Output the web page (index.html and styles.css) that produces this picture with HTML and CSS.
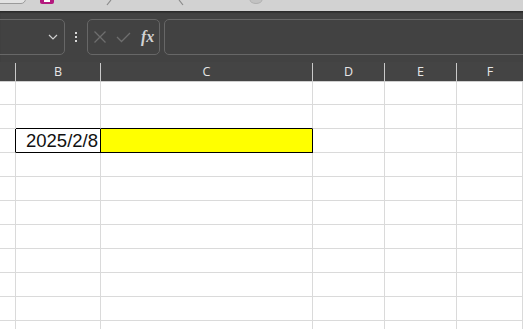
FILE: index.html
```html
<!DOCTYPE html>
<html lang="en">
<head>
    <meta charset="UTF-8">
    <title>Sheet</title>
    <link rel="stylesheet" href="styles.css">
</head>
<body>
    <div class="ribbon">
        <div class="ribbon-tab"></div>
        <div class="ribbon-icon"><span></span></div>
        <svg class="ribbon-marks" width="270" height="11" viewBox="0 0 270 11">
            <path d="M111 0 L107 5" stroke="#8a8a8a" stroke-width="1.2" fill="none"/>
            <path d="M179 0 L183 5" stroke="#8a8a8a" stroke-width="1.2" fill="none"/>
            <ellipse cx="256" cy="0" rx="6" ry="3.5" fill="#c2c2c2" stroke="#b0b0b0"/>
        </svg>
    </div>

    <div class="formula-bar">
        <div class="name-box">
            <svg width="10" height="6" viewBox="0 0 10 6">
                <path d="M1 1 L5 5 L9 1" stroke="#d0d0d0" stroke-width="1.2" fill="none"/>
            </svg>
        </div>
        <div class="more-dots"><i></i><i></i><i></i></div>
        <div class="fx-box">
            <svg class="fx-icon" width="14" height="14" viewBox="0 0 14 14">
                <path d="M1.5 1.5 L12.5 12.5 M12.5 1.5 L1.5 12.5" stroke="#6e6e6e" stroke-width="1.3" fill="none"/>
            </svg>
            <svg class="fx-icon" width="15" height="11" viewBox="0 0 15 11">
                <path d="M1 5 L5.5 9.5 L14 1" stroke="#6e6e6e" stroke-width="1.3" fill="none"/>
            </svg>
            <span class="fx-label">fx</span>
        </div>
        <div class="formula-input"></div>
    </div>

    <div class="sheet">
        <div class="grid head">
            <div class="hcell"></div>
            <div class="hcell">B</div>
            <div class="hcell">C</div>
            <div class="hcell">D</div>
            <div class="hcell">E</div>
            <div class="hcell last">F</div>
        </div>
        <div class="grid body">
            <!-- row 1 -->
            <div class="cell"></div><div class="cell"></div><div class="cell"></div><div class="cell"></div><div class="cell"></div><div class="cell"></div>
            <!-- row 2 -->
            <div class="cell"></div><div class="cell bb"></div><div class="cell bb"></div><div class="cell"></div><div class="cell"></div><div class="cell"></div>
            <!-- row 3 -->
            <div class="cell br"></div><div class="cell br bb date">2025/2/8</div><div class="cell br bb fill"></div><div class="cell"></div><div class="cell"></div><div class="cell"></div>
            <!-- rows 4-11 -->
            <div class="cell"></div><div class="cell"></div><div class="cell"></div><div class="cell"></div><div class="cell"></div><div class="cell"></div>
            <div class="cell"></div><div class="cell"></div><div class="cell"></div><div class="cell"></div><div class="cell"></div><div class="cell"></div>
            <div class="cell"></div><div class="cell"></div><div class="cell"></div><div class="cell"></div><div class="cell"></div><div class="cell"></div>
            <div class="cell"></div><div class="cell"></div><div class="cell"></div><div class="cell"></div><div class="cell"></div><div class="cell"></div>
            <div class="cell"></div><div class="cell"></div><div class="cell"></div><div class="cell"></div><div class="cell"></div><div class="cell"></div>
            <div class="cell"></div><div class="cell"></div><div class="cell"></div><div class="cell"></div><div class="cell"></div><div class="cell"></div>
            <div class="cell"></div><div class="cell"></div><div class="cell"></div><div class="cell"></div><div class="cell"></div><div class="cell"></div>
            <div class="cell"></div><div class="cell"></div><div class="cell"></div><div class="cell"></div><div class="cell"></div><div class="cell"></div>
        </div>
    </div>
</body>
</html>
```

FILE: styles.css
```css
body {
    margin: 0;
    width: 523px;
    height: 329px;
    overflow: hidden;
    background-color: #fff;
    font-family: "Liberation Sans", Arial, sans-serif;
}

/* ribbon edge at the top */
.ribbon {
    position: relative;
    height: 11px;
    background-color: #d2d2d2;
    overflow: hidden;
}

.ribbon-tab {
    position: absolute;
    left: -6px;
    top: -12px;
    width: 30px;
    height: 14px;
    border: 1px solid #9a9a9a;
    border-radius: 5px;
    background-color: #e2e2e2;
}

.ribbon-icon {
    position: absolute;
    left: 40px;
    top: -8px;
    width: 14px;
    height: 12px;
    background-color: #b4197e;
    border-radius: 2px;
}

.ribbon-icon span {
    position: absolute;
    left: 4px;
    top: 2px;
    width: 6px;
    height: 8px;
    background-color: #fff;
}

.ribbon-marks {
    position: absolute;
    left: 0;
    top: 0;
}

/* formula bar */
.formula-bar {
    display: flex;
    align-items: center;
    height: 50px;
    background-color: #424242;
    border-top: 1px solid #2b2b2b;
    box-shadow: inset 0 1px 1px #333;
}

.name-box {
    display: flex;
    align-items: center;
    justify-content: flex-end;
    box-sizing: border-box;
    width: 71px;
    height: 36px;
    margin-left: -6px;
    padding-right: 6px;
    border: 1px solid #676767;
    border-radius: 5px;
}

.more-dots {
    display: flex;
    flex-direction: column;
    gap: 2px;
    width: 22px;
    align-items: center;
}

.more-dots i {
    width: 2px;
    height: 2px;
    background-color: #d8d8d8;
}

.fx-box {
    display: flex;
    align-items: center;
    box-sizing: border-box;
    width: 73px;
    height: 36px;
    padding-left: 5px;
    gap: 9px;
    border: 1px solid #676767;
    border-radius: 5px;
}

.fx-label {
    margin-left: 1px;
    color: #d2d2d2;
    font-family: "Liberation Serif", "Times New Roman", serif;
    font-style: italic;
    font-weight: bold;
    font-size: 16px;
}

.formula-input {
    flex: 1;
    height: 36px;
    margin-left: 4px;
    margin-right: -8px;
    box-sizing: border-box;
    border: 1px solid #676767;
    border-radius: 5px;
}

/* sheet */
.grid {
    display: grid;
    grid-template-columns: 16px 85px 212px 72px 72px 1fr;
}

.head {
    height: 19px;
    background-color: #444;
    border-bottom: 1px solid #cfcfcf;
}

.hcell {
    display: flex;
    align-items: flex-end;
    justify-content: center;
    padding-bottom: 2px;
    color: #e6e6e6;
    font-family: "Open Sans", sans-serif;
    font-size: 12.5px;
    line-height: 14px;
    border-right: 1px solid #c9c9c9;
    margin-top: 1px;
}

.hcell.last {
    border-right: none;
}

.body {
    grid-template-rows: 23px;
    grid-auto-rows: 24px;
}

.cell {
    box-sizing: border-box;
    border-right: 1px solid #dadada;
    border-bottom: 1px solid #dadada;
}

.cell.br {
    border-right-color: #000;
}

.cell.bb {
    border-bottom-color: #000;
}

.date {
    text-align: right;
    padding-right: 2px;
    font-size: 18.5px;
    line-height: 24px;
    color: #111;
}

.fill {
    background-color: #ffff00;
}
```
